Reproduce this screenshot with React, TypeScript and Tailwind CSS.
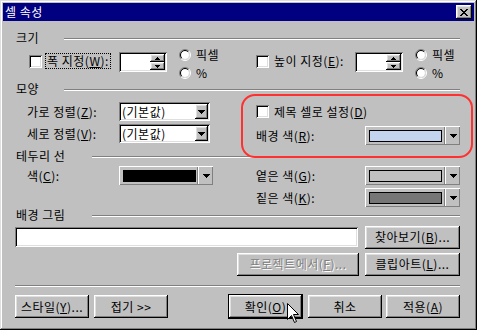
import React from 'react';

const raised =
  'shadow-[inset_-1px_-1px_#000,inset_1px_1px_#fff,inset_-2px_-2px_#808080,inset_2px_2px_#dfdfdf]';
const sunken =
  'shadow-[inset_1px_1px_#808080,inset_-1px_-1px_#fff,inset_2px_2px_#000,inset_-2px_-2px_#dfdfdf]';

const Key: React.FC<{ children: React.ReactNode }> = ({ children }) => (
  <span className="underline underline-offset-[1px]">{children}</span>
);

const Check = () => <div className={`w-[13px] h-[13px] shrink-0 bg-white ${sunken}`} />;

const Radio = () => (
  <svg width="12" height="12" viewBox="0 0 12 12" className="shrink-0">
    <circle cx="6" cy="6" r="4" fill="#fff" />
    <path d="M2.1 9.9A5.5 5.5 0 0 1 9.9 2.1" fill="none" stroke="#808080" />
    <path d="M9.9 2.1A5.5 5.5 0 0 1 2.1 9.9" fill="none" stroke="#fff" />
    <path d="M2.8 9.2A4.5 4.5 0 0 1 9.2 2.8" fill="none" stroke="#000" />
    <path d="M9.2 2.8A4.5 4.5 0 0 1 2.8 9.2" fill="none" stroke="#dfdfdf" />
  </svg>
);

const DownTri = () => (
  <svg width="7" height="4" viewBox="0 0 7 4">
    <path d="M0 0h7v1H0z M1 1h5v1H1z M2 2h3v1H2z M3 3h1v1H3z" fill="#000" />
  </svg>
);

const SpinUp = () => (
  <svg width="5" height="3" viewBox="0 0 5 3">
    <path d="M2 0h1v1H2z M1 1h3v1H1z M0 2h5v1H0z" fill="#000" />
  </svg>
);

const SpinDown = () => (
  <svg width="5" height="3" viewBox="0 0 5 3">
    <path d="M0 0h5v1H0z M1 1h3v1H1z M2 2h1v1H2z" fill="#000" />
  </svg>
);

const Heading: React.FC<{ label: string; w: string; className?: string }> = ({ label, w, className }) => (
  <div className={`flex h-[14px] ${className ?? ''}`}>
    <span className={`pl-[1px] shrink-0 ${w}`}>{label}</span>
    <div className="flex-1 mt-[7px] h-[2px] border-t border-b border-t-[#808080] border-b-white" />
  </div>
);

const Spin = () => (
  <div className={`w-[48px] h-[20px] p-[2px] flex bg-white shrink-0 ${sunken}`}>
    <div className="flex-1" />
    <div className="w-[15px] flex flex-col">
      <div className={`flex-1 flex items-center justify-center bg-[#c0c0c0] ${raised}`}>
        <SpinUp />
      </div>
      <div className={`flex-1 flex items-center justify-center bg-[#c0c0c0] ${raised}`}>
        <SpinDown />
      </div>
    </div>
  </div>
);

const Units = () => (
  <div className="flex flex-col gap-[6px] shrink-0">
    <div className="flex items-center h-[12px] gap-[5px]">
      <Radio />
      <span>픽셀</span>
    </div>
    <div className="flex items-center h-[12px] gap-[5px]">
      <Radio />
      <span>%</span>
    </div>
  </div>
);

const Combo: React.FC<{ text: string; w: string }> = ({ text, w }) => (
  <div className={`${w} h-[19px] p-[2px] flex bg-white shrink-0 ${sunken}`}>
    <span className="flex-1 pl-[1px] leading-[15px]">{text}</span>
    <div className={`w-[13px] flex items-center justify-center bg-[#c0c0c0] ${raised}`}>
      <DownTri />
    </div>
  </div>
);

const ColorCombo: React.FC<{ swatch: string; w: string }> = ({ swatch, w }) => (
  <div className={`${w} h-[19px] flex shrink-0 shadow-[inset_1px_1px_#fff,inset_-1px_-1px_#808080]`}>
    <div className="flex-1 pl-[4px] pt-[4px]">
      <div className={`w-[73px] h-[12px] border border-black ${swatch}`} />
    </div>
    <div className="w-[1px] my-[1px] bg-[#808080]" />
    <div className="w-[1px] my-[1px] bg-white" />
    <div className="w-[14px] flex items-center justify-center">
      <DownTri />
    </div>
  </div>
);

const Btn: React.FC<{ w: string; disabled?: boolean; children: React.ReactNode }> = ({ w, disabled, children }) => (
  <div
    className={`${w} h-[23px] flex items-center justify-center shrink-0 ${raised} ${
      disabled ? 'text-[#808080] [text-shadow:1px_1px_0_#fff]' : ''
    }`}
  >
    {children}
  </div>
);

export default function App() {
  return (
    <div className="relative w-[477px] h-[330px] p-[3px] bg-[#c0c0c0] text-black text-[12px] leading-[14px] tracking-[0.5px] font-['Noto_Sans_CJK_KR',sans-serif] shadow-[inset_-1px_-1px_#000,inset_1px_1px_#dfdfdf,inset_-2px_-2px_#808080,inset_2px_2px_#fff]">
      {/* title bar */}
      <div className="h-[18px] bg-[#000080] flex items-center justify-between px-[2px]">
        <span className="text-white">셀 속성</span>
        <div className={`w-[16px] h-[14px] flex items-center justify-center bg-[#c0c0c0] ${raised}`}>
          <svg width="8" height="7" viewBox="0 0 8 7">
            <path
              d="M0 0h2v1H0z M6 0h2v1H6z M1 1h2v1H1z M5 1h2v1H5z M2 2h4v1H2z M3 3h2v1H3z M2 4h4v1H2z M1 5h2v1H1z M5 5h2v1H5z M0 6h2v1H0z M6 6h2v1H6z"
              fill="#000"
            />
          </svg>
        </div>
      </div>

      <div className="pl-[12px] pr-[14px] flex flex-col">
        {/* 크기 */}
        <Heading label="크기" w="w-[49px]" className="mt-[10px]" />
        <div className="flex h-[32px] mt-[4px]">
          <div className="w-[241px] flex items-start shrink-0">
            <div className="ml-[14px] mt-[6px]">
              <Check />
            </div>
            <div className="ml-[3px] mt-[4px] w-[66px] h-[16px] px-[1px] flex items-center border border-dotted border-black whitespace-nowrap">
              폭 지정(<Key>W</Key>):
            </div>
            <div className="ml-[8px] mt-[3px]">
              <Spin />
            </div>
            <div className="ml-[12px]">
              <Units />
            </div>
          </div>
          <div className="flex items-start">
            <div className="mt-[6px]">
              <Check />
            </div>
            <div className="ml-[5px] mt-[5px] w-[81px] h-[14px] flex items-center whitespace-nowrap">
              높이 지정(<Key>E</Key>):
            </div>
            <div className="mt-[3px]">
              <Spin />
            </div>
            <div className="ml-[12px]">
              <Units />
            </div>
          </div>
        </div>

        {/* 모양 */}
        <Heading label="모양" w="w-[49px]" className="mt-[1px]" />
        <div className="flex mt-[6px]">
          <div className="w-[241px] flex flex-col gap-[3px] shrink-0">
            <div className="flex items-center h-[19px]">
              <span className="ml-[12px] w-[92px]">
                가로 정렬(<Key>Z</Key>):
              </span>
              <Combo text="(기본값)" w="w-[91px]" />
            </div>
            <div className="flex items-center h-[19px]">
              <span className="ml-[12px] w-[92px]">
                세로 정렬(<Key>V</Key>):
              </span>
              <Combo text="(기본값)" w="w-[91px]" />
            </div>
          </div>
          <div className="flex flex-col gap-[5px] flex-1">
            <div className="flex items-center h-[19px]">
              <Check />
              <span className="ml-[5px]">
                제목 셀로 설정(<Key>D</Key>)
              </span>
            </div>
            <div className="flex items-center h-[19px]">
              <span className="w-[109px]">
                배경 색(<Key>R</Key>):
              </span>
              <ColorCombo swatch="bg-[#c4d4ee]" w="w-[95px]" />
            </div>
          </div>
        </div>

        {/* 테두리 선 */}
        <Heading label="테두리 선" w="w-[77px]" className="mt-[4px]" />
        <div className="flex mt-[3px]">
          <div className="w-[241px] flex flex-col shrink-0">
            <div className="flex items-center h-[19px]">
              <span className="ml-[12px] w-[92px]">
                색(<Key>C</Key>):
              </span>
              <ColorCombo swatch="bg-black" w="w-[94px]" />
            </div>
          </div>
          <div className="flex flex-col gap-[3px] flex-1">
            <div className="flex items-center h-[19px]">
              <span className="w-[109px]">
                옅은 색(<Key>G</Key>):
              </span>
              <ColorCombo swatch="bg-[#c0c0c0]" w="w-[95px]" />
            </div>
            <div className="flex items-center h-[19px]">
              <span className="w-[109px]">
                짙은 색(<Key>K</Key>):
              </span>
              <ColorCombo swatch="bg-[#767676]" w="w-[95px]" />
            </div>
          </div>
        </div>

        {/* 배경 그림 */}
        <Heading label="배경 그림" w="w-[77px]" className="mt-[1px]" />
        <div className="flex items-center justify-between h-[22px] mt-[4px]">
          <div className={`w-[343px] h-[20px] bg-white ${sunken}`} />
          <Btn w="w-[95px]">
            찾아보기(<Key>B</Key>)...
          </Btn>
        </div>
        <div className="flex items-center justify-end gap-[6px] h-[22px] mt-[5px]">
          <Btn w="w-[122px]" disabled>
            프로젝트에서(<Key>F</Key>)...
          </Btn>
          <Btn w="w-[95px]">
            클립아트(<Key>L</Key>)...
          </Btn>
        </div>

        <div className="mt-[10px] h-[2px] border-t border-b border-t-[#808080] border-b-white" />

        {/* buttons */}
        <div className="flex items-center h-[23px] mt-[8px]">
          <Btn w="w-[74px]">
            스타일(<Key>Y</Key>)...
          </Btn>
          <div className="ml-[5px]">
            <Btn w="w-[74px]">접기 &gt;&gt;</Btn>
          </div>
          <div className="ml-auto w-[75px] h-[25px] border border-black shrink-0">
            <div className={`h-full flex items-center justify-center ${raised}`}>
              확인(<Key>O</Key>)
            </div>
          </div>
          <div className="ml-[5px]">
            <Btn w="w-[74px]">취소</Btn>
          </div>
          <div className="ml-[4px]">
            <Btn w="w-[74px]">
              적용(<Key>A</Key>)
            </Btn>
          </div>
        </div>
      </div>

      {/* annotation ring */}
      <div className="absolute left-[241px] top-[94px] w-[232px] h-[64px] rounded-[14px] border-2 border-[#ff3030]" />

      {/* mouse cursor */}
      <svg className="absolute left-[287px] top-[303px]" width="13" height="21" viewBox="0 0 13 21">
        <path d="M0.5 0.5V16.5L4.5 12.5L7.5 19.5L9.5 18.5L6.5 11.5H11.5Z" fill="#fff" stroke="#000" />
      </svg>
    </div>
  );
}
